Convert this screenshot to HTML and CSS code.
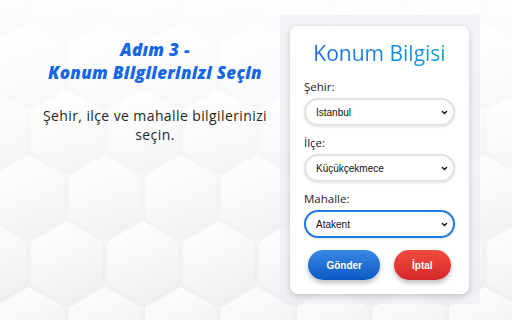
FILE: index.html
```html
<!DOCTYPE html>
<html lang="tr">
<head>
<meta charset="utf-8">
<title>Konum Bilgisi</title>
<link rel="stylesheet" href="styles.css">
</head>
<body>
<svg class="bg" width="512" height="320" viewBox="0 0 512 320" aria-hidden="true">
  <defs>
    <linearGradient id="hexfill" x1="0" y1="0" x2="0.4" y2="1">
      <stop offset="0" stop-color="#ffffff"/>
      <stop offset="1" stop-color="#eeeef0"/>
    </linearGradient>
    <g id="hex">
      <polygon points="0,-43 37,-21.5 37,21.5 0,43 -37,21.5 -37,-21.5" fill="url(#hexfill)" stroke="#e4e4e6" stroke-width="1"/>
    </g>
    <pattern id="hexes" x="-9" y="-1" width="76" height="132" patternUnits="userSpaceOnUse">
      <use href="#hex" x="0" y="0"/>
      <use href="#hex" x="76" y="0"/>
      <use href="#hex" x="0" y="132"/>
      <use href="#hex" x="76" y="132"/>
      <use href="#hex" x="38" y="66"/>
    </pattern>
    <linearGradient id="fade" x1="0" y1="0" x2="0" y2="1">
      <stop offset="0" stop-color="#ffffff" stop-opacity="0.85"/>
      <stop offset="0.45" stop-color="#ffffff" stop-opacity="0.5"/>
      <stop offset="1" stop-color="#ffffff" stop-opacity="0.05"/>
    </linearGradient>
  </defs>
  <rect width="512" height="320" fill="#fbfbfb"/>
  <rect width="512" height="320" fill="url(#hexes)"/>
  <rect width="512" height="320" fill="url(#fade)"/>
</svg>
<main class="page">
  <section class="intro">
    <h1 class="intro-title">Adım 3 -<br>Konum Bilgilerinizi Seçin</h1>
    <p class="intro-text">Şehir, ilçe ve mahalle bilgilerinizi seçin.</p>
  </section>
  <section class="panel">
    <form class="card">
      <h2 class="card-title">Konum Bilgisi</h2>
      <label class="field-label" for="sehir">Şehir:</label>
      <div class="select-wrap">
        <select id="sehir" class="field">
          <option>İstanbul</option>
        </select>
        <svg class="chevron" width="7" height="5" viewBox="0 0 7 5" aria-hidden="true"><path d="M1 1 L3.5 3.5 L6 1" fill="none" stroke="#111" stroke-width="1.4"/></svg>
      </div>
      <label class="field-label" for="ilce">İlçe:</label>
      <div class="select-wrap">
        <select id="ilce" class="field">
          <option>Küçükçekmece</option>
        </select>
        <svg class="chevron" width="7" height="5" viewBox="0 0 7 5" aria-hidden="true"><path d="M1 1 L3.5 3.5 L6 1" fill="none" stroke="#111" stroke-width="1.4"/></svg>
      </div>
      <label class="field-label" for="mahalle">Mahalle:</label>
      <div class="select-wrap">
        <select id="mahalle" class="field field-active">
          <option>Atakent</option>
        </select>
        <svg class="chevron" width="7" height="5" viewBox="0 0 7 5" aria-hidden="true"><path d="M1 1 L3.5 3.5 L6 1" fill="none" stroke="#111" stroke-width="1.4"/></svg>
      </div>
      <div class="actions">
        <button type="button" class="btn btn-primary">Gönder</button>
        <button type="button" class="btn btn-danger">İptal</button>
      </div>
    </form>
  </section>
</main>
</body>
</html>
```
FILE: styles.css
```css
html, body {
  margin: 0;
  padding: 0;
  width: 512px;
  height: 320px;
  overflow: hidden;
  background: #ffffff;
}

.bg {
  position: absolute;
  left: 0;
  top: 0;
  z-index: 0;
}

.page {
  position: relative;
  z-index: 1;
  display: flex;
  flex-direction: row;
  align-items: flex-start;
  padding-left: 30px;
  height: 320px;
  box-sizing: border-box;
}

.intro {
  width: 250px;
  padding-top: 38px;
  text-align: center;
}

.intro-title {
  margin: 0;
  font-family: "Open Sans", sans-serif;
  font-weight: 800;
  font-style: italic;
  font-size: 17px;
  letter-spacing: 0.3px;
  line-height: 23px;
  color: #1766e6;
}

.intro-text {
  margin: 22px 0 0;
  font-family: "Open Sans", sans-serif;
  font-weight: 400;
  font-size: 14px;
  letter-spacing: 0.4px;
  line-height: 19px;
  color: #262626;
}

.panel {
  margin-top: 15px;
  width: 200px;
  padding: 11px 11px 10px 10px;
  box-sizing: border-box;
  background: rgba(236, 236, 244, 0.6);
  border-radius: 4px;
}

.card {
  display: flex;
  flex-direction: column;
  padding: 12px 14px 14px;
  background: #ffffff;
  border-radius: 8px;
  box-shadow: 0 2px 6px rgba(0, 0, 0, 0.18);
}

.card-title {
  margin: 0 0 12px;
  text-align: center;
  font-family: "Open Sans", sans-serif;
  font-weight: 400;
  font-size: 21px;
  line-height: 30px;
  background: linear-gradient(90deg, #1e66e6, #13a6d6);
  -webkit-background-clip: text;
  background-clip: text;
  color: transparent;
}

.field-label {
  font-family: "Open Sans", sans-serif;
  font-size: 11.5px;
  line-height: 14px;
  color: #222222;
  margin-bottom: 4px;
}

.select-wrap {
  position: relative;
  margin-bottom: 10px;
}

.field {
  display: block;
  width: 100%;
  height: 28px;
  padding: 0 16px 0 10px;
  border: 2px solid #e2e2e2;
  border-radius: 14px;
  background: #ffffff;
  font-family: "Liberation Sans", Arial, sans-serif;
  font-size: 10px;
  color: #111111;
  box-shadow: 0 1px 3px rgba(0, 0, 0, 0.12);
  outline: none;
  -webkit-appearance: none;
  appearance: none;
}

.field-active {
  border-color: #1f7ae8;
}

.chevron {
  position: absolute;
  right: 7px;
  top: 12px;
  pointer-events: none;
}

.actions {
  display: flex;
  justify-content: center;
  gap: 14px;
  margin-top: 2px;
}

.btn {
  height: 30px;
  padding: 0 18px;
  border: none;
  border-radius: 15px;
  font-family: "Liberation Sans", Arial, sans-serif;
  font-weight: 700;
  font-size: 10px;
  color: #ffffff;
  box-shadow: 0 3px 5px rgba(0, 0, 0, 0.25);
}

.btn-primary {
  background: linear-gradient(180deg, #3a89e6, #0a58c2);
}

.btn-danger {
  background: linear-gradient(180deg, #f24c3f, #d5292b);
}
```
